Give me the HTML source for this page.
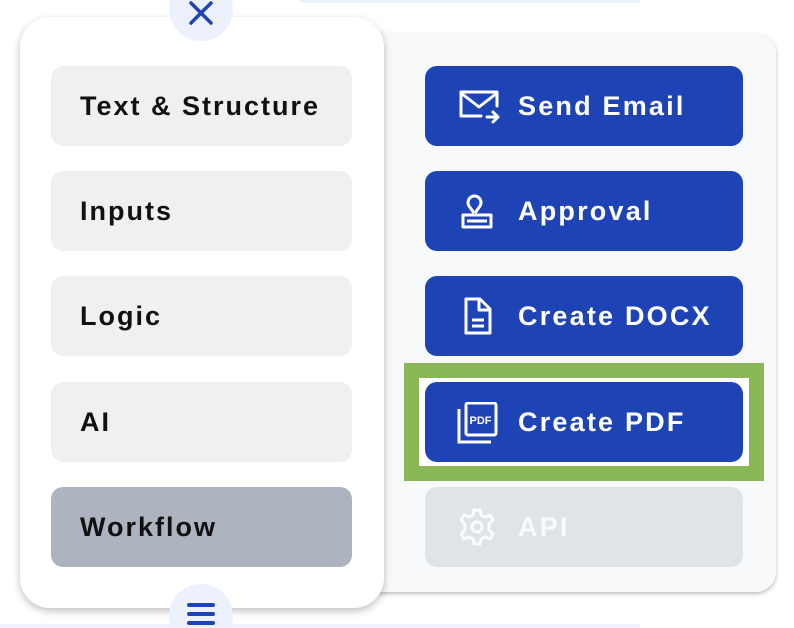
<!DOCTYPE html>
<html><head><meta charset="utf-8"><style>
*{margin:0;padding:0;box-sizing:border-box}
html,body{width:794px;height:628px;overflow:hidden}
body{background:#fff;position:relative;font-family:"Liberation Sans",sans-serif;font-weight:bold}
.line{position:absolute;height:3px;background:#eef2fd}
.right{position:absolute;left:340px;top:33px;width:436px;height:559px;background:#f8f9fb;border-radius:20px;box-shadow:0 2px 4px rgba(0,0,0,.25)}
.left{position:absolute;left:20px;top:17px;width:364px;height:591px;background:#fff;border-radius:30px;box-shadow:0 3px 8px rgba(0,0,0,.25)}
.lb{position:absolute;left:51px;width:301px;height:80px;border-radius:12px;background:#eff0f2;color:#111;font-size:27px;line-height:80px;padding-left:29px;letter-spacing:2px}
.rb{position:absolute;left:425px;width:318px;height:80px;border-radius:12px;background:#1e43b4;color:#fff;font-size:27px;line-height:80px;padding-left:93px;letter-spacing:2.2px}
.rb svg{position:absolute;left:32px;top:20px;letter-spacing:0}
.circ{position:absolute;width:64px;height:64px;border-radius:50%;background:#edf1fd}
.green{position:absolute;left:404px;top:363px;width:360px;height:118px;border:15px solid #8ab755;background:#fff}
</style></head><body>
<div class="line" style="left:300px;top:0;width:340px"></div>
<div class="line" style="left:0;top:624px;width:640px;height:4px"></div>
<div class="right"></div>
<div class="green"></div>
<div class="rb" style="top:66px">Send Email<svg width="44" height="40" viewBox="0 0 44 40" fill="none" stroke="#fff" stroke-width="3" stroke-linejoin="round" stroke-linecap="round"><path d="M24 30H4V6h36v14M4 7l18 14 18-14M30 31h10M36 26l5 5-5 5" /></svg></div>
<div class="rb" style="top:171px">Approval<svg width="44" height="40" viewBox="0 0 44 40" fill="none" stroke="#fff" stroke-width="3" stroke-linejoin="round"><path d="M17 22l-5-7a6.5 6.5 0 1 1 11 0l-5 7M6 24h28v12H6zM10 30h20"/></svg></div>
<div class="rb" style="top:276px">Create DOCX<svg width="44" height="40" viewBox="0 0 44 40" fill="none" stroke="#fff" stroke-width="3" stroke-linejoin="round"><path d="M9 3h14l10 10v24H9zM22 3v11h11M15 24h12M15 30h12"/></svg></div>
<div class="rb" style="top:382px">Create PDF<svg width="44" height="42" viewBox="0 0 44 42" fill="none" stroke="#fff" stroke-width="3"><path d="M2 7v33h32"/><rect x="9" y="1" width="30" height="32" rx="2"/><text x="12.5" y="22" fill="#fff" stroke="none" font-size="11" letter-spacing="0" font-family="Liberation Sans" font-weight="bold">PDF</text></svg></div>
<div class="rb" style="top:487px;background:#e0e3e8;color:#f9fafb">API<svg width="44" height="40" viewBox="0 0 44 40" fill="none" stroke="#fafbfc" stroke-width="3" stroke-linejoin="round"><circle cx="20" cy="20" r="5"/><path d="M17 3h6l1 5 4 2 5-2 3 5-4 4v6l4 4-3 5-5-2-4 2-1 5h-6l-1-5-4-2-5 2-3-5 4-4v-6l-4-4 3-5 5 2 4-2z"/></svg></div>
<div class="left"></div>
<div class="lb" style="top:66px">Text &amp; Structure</div>
<div class="lb" style="top:171px">Inputs</div>
<div class="lb" style="top:276px">Logic</div>
<div class="lb" style="top:382px">AI</div>
<div class="lb" style="top:487px;background:#adb4bf">Workflow</div>
<div class="circ" style="left:169px;top:-23px"><svg width="64" height="64" viewBox="0 0 64 64"><path d="M22 26l20 20M42 26L22 46" stroke="#1e43b4" stroke-width="3.5" stroke-linecap="round"/></svg></div>
<div class="circ" style="left:169px;top:584px"><svg width="64" height="64" viewBox="0 0 64 64"><path d="M20 21h24M20 30h24M20 39h24" stroke="#1e43b4" stroke-width="4" stroke-linecap="round"/></svg></div>
</body></html>
